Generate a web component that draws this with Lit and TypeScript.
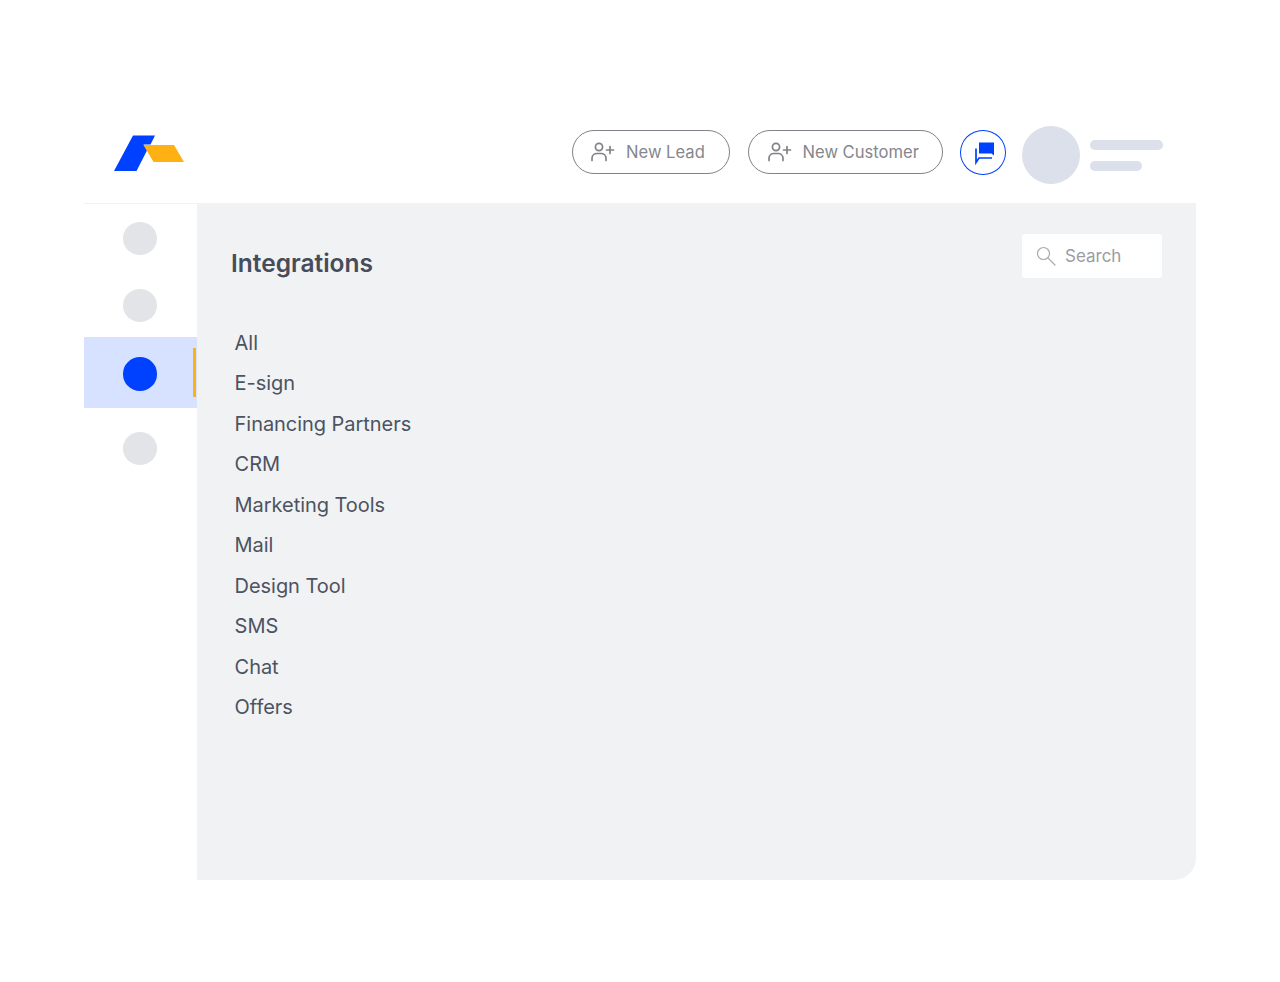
import { LitElement, html, css, svg } from "lit";
import { customElement } from "lit/decorators.js";

const personPlus = svg`<svg class="pi" width="24" height="20" viewBox="0 0 24 20" fill="none" stroke="#808288" stroke-width="1.7" stroke-linecap="round"><circle cx="8" cy="5" r="3.6"/><path d="M1 18.500v-2.200c0-3 2.400-4.800 5-4.800h4c2.600 0 5 1.800 5 4.800v2.200"/><path d="M15.500 8h7M19 4.500v7"/></svg>`;

const cats = ["All", "E-sign", "Financing Partners", "CRM", "Marketing Tools", "Mail", "Design Tool", "SMS", "Chat", "Offers"];

@customElement("app-root")
export class AppRoot extends LitElement {
  static styles = css`
    :host { display: block; height: 982px; background: #fff; font-family: Inter, "Liberation Sans", sans-serif; }
    .frame { width: 1112px; margin-left: 84px; padding-top: 126px; }
    .top { height: 77px; display: flex; align-items: flex-start; }
    .logo { margin: 9px 0 0 30px; display: block; }
    .actions { margin-left: auto; display: flex; align-items: flex-start; padding-right: 33px; }
    .btn { box-sizing: border-box; height: 44px; margin-top: 4px; border: 1.5px solid #808288; border-radius: 22px; display: flex; align-items: center; padding-left: 18.5px; color: #85878c; font-size: 16.6px; white-space: nowrap; }
    .btn.lead { width: 158.5px; margin-right: 18px; }
    .btn.cust { width: 195px; margin-right: 17px; }
    .pi { margin-right: 11px; flex: none; }
    .chat { box-sizing: border-box; width: 45.500px; height: 45px; margin-top: 4px; margin-right: 16.500px; border: 1.5px solid #0041ff; border-radius: 50%; display: flex; align-items: center; justify-content: center; }
    .avatar { width: 58px; height: 58px; border-radius: 50%; background: #dbe0ea; margin-right: 10px; }
    .lines { display: flex; flex-direction: column; gap: 11px; padding-top: 14px; }
    .lines i { display: block; height: 10px; border-radius: 5px; background: #dbe0ea; }
    .lines i:first-child { width: 73px; }
    .lines i:last-child { width: 52px; }
    .body { display: flex; height: 677px; }
    .side { width: 113px; flex: none; border-top: 1px solid #f1f2f4; box-sizing: border-box; }
    .item { display: flex; justify-content: center; position: relative; padding-right: 1px; }
    .dot { width: 34.6px; height: 33px; border-radius: 50%; background: #e2e4e8; }
    .item.a { height: 65px; padding-top: 18px; box-sizing: border-box; }
    .item.b { height: 68px; padding-top: 20px; box-sizing: border-box; }
    .item.on { height: 71px; background: #d6e2ff; padding-top: 20px; box-sizing: border-box; }
    .item.on .dot { background: #0041ff; height: 34px; }
    .item.on::after { content: ""; position: absolute; right: 1px; top: 11px; width: 3px; height: 49px; background: #ffb114; }
    .item.d { padding-top: 24px; }
    .main { flex: 1; background: #f1f2f4; border-bottom-right-radius: 22px; padding: 31px 34px 0 34px; }
    .head { display: flex; justify-content: space-between; align-items: flex-start; height: 78px; }
    h1 { margin: 13px 0 0; font-size: 24.5px; line-height: 32px; font-weight: 600; color: #464c59; }
    .search { box-sizing: border-box; width: 140px; height: 44px; background: #fff; border-radius: 4px; display: flex; align-items: center; padding-left: 14px; color: #9a9ca1; font-size: 17px; gap: 9px; }
    ul { list-style: none; margin: 11px 0 0 3.6px; padding: 0; }
    li { height: 40.44px; line-height: 40.44px; font-size: 20px; letter-spacing: -0.05px; color: #4c5361; white-space: nowrap; }
  `;

  render() {
    return html`<div class="frame">
      <div class="top">
        <svg class="logo" width="70" height="36" viewBox="0 0 70 36">
          <path d="M19 0.500H41L36.500 9.500H29.500L33 15.500L22.500 36H0Z" fill="#0041ff"/>
          <path d="M29.500 10H60L70 27H39.500Z" fill="#ffb114"/>
        </svg>
        <div class="actions">
          <div class="btn lead">${personPlus}New Lead</div>
          <div class="btn cust">${personPlus}New Customer</div>
          <div class="chat">
            <svg width="24" height="24" viewBox="0 0 24 24">
              <path d="M8 1.500H23V14.500L20.500 12.500H8Z" fill="#0041ff"/>
              <path d="M5 7.500V21.500L8 17H21" fill="none" stroke="#0041ff" stroke-width="1.700"/>
            </svg>
          </div>
          <div class="avatar"></div>
          <div class="lines"><i></i><i></i></div>
        </div>
      </div>
      <div class="body">
        <div class="side">
          <div class="item a"><div class="dot"></div></div>
          <div class="item b"><div class="dot"></div></div>
          <div class="item on"><div class="dot"></div></div>
          <div class="item d"><div class="dot"></div></div>
        </div>
        <div class="main">
          <div class="head">
            <h1>Integrations</h1>
            <div class="search">
              <svg width="20" height="20" viewBox="0 0 20 20" fill="none" stroke="#a9abb0" stroke-width="1.200" stroke-linecap="round"><circle cx="7.500" cy="7.500" r="6"/><path d="M12 12l7 7"/></svg>
              Search
            </div>
          </div>
          <ul>${cats.map((c) => html`<li>${c}</li>`)}</ul>
        </div>
      </div>
    </div>`;
  }
}
